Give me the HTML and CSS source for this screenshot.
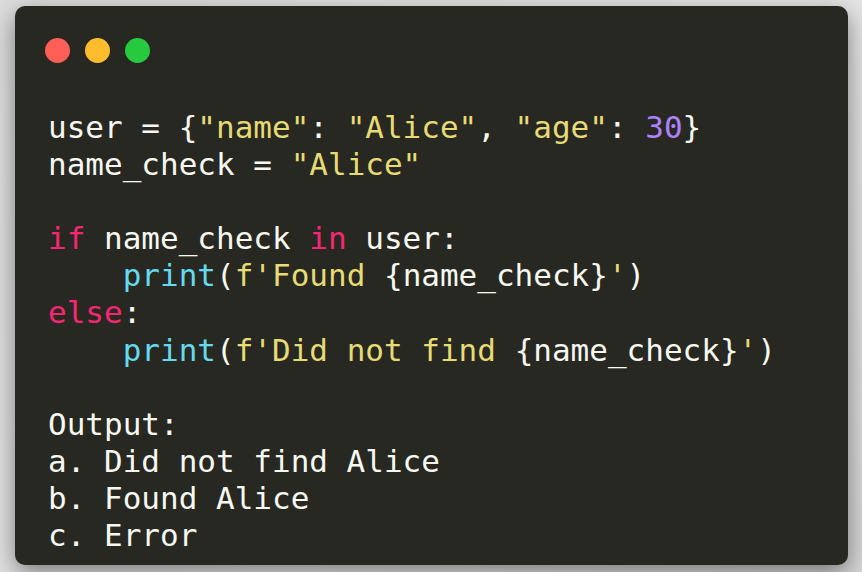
FILE: index.html
```html
<!DOCTYPE html>
<html>
<head>
<meta charset="utf-8">
<link rel="stylesheet" href="styles.css">
</head>
<body>
<div class="page">
  <div class="window">
    <div class="dots">
      <span class="dot red"></span>
      <span class="dot yellow"></span>
      <span class="dot green"></span>
    </div>
<pre class="code">user = {<span class="s">"name"</span>: <span class="s">"Alice"</span>, <span class="s">"age"</span>: <span class="n">30</span>}
name_check = <span class="s">"Alice"</span>

<span class="k">if</span> name_check <span class="k">in</span> user:
    <span class="f">print</span>(<span class="s">f'Found </span>{name_check}<span class="s">'</span>)
<span class="k">else</span>:
    <span class="f">print</span>(<span class="s">f'Did not find </span>{name_check}<span class="s">'</span>)

Output:
a. Did not find Alice
b. Found Alice
c. Error</pre>
  </div>
</div>
</body>
</html>
```
FILE: styles.css
```css
html, body {
  margin: 0;
  padding: 0;
}
body {
  width: 862px;
  height: 572px;
  overflow: hidden;
  background: linear-gradient(135deg, #dcdcdc 0%, #e4e4e4 60%, #d6d6d6 100%);
}
.page {
  padding: 6px 14px 0 15px;
}
.window {
  width: 833px;
  height: 559px;
  box-sizing: border-box;
  background: #272822;
  border-radius: 10px;
  box-shadow: 0 8px 24px rgba(0, 0, 0, 0.45);
  padding: 32px 30px 0 30px;
}
.dots {
  display: flex;
  gap: 15px;
}
.dot {
  width: 25px;
  height: 25px;
  border-radius: 50%;
  display: block;
}
.red { background: #ff5f56; }
.yellow { background: #ffbd2e; }
.green { background: #27c93f; }
.code {
  margin: 46px 0 0 0;
  padding-left: 3px;
  font-family: "DejaVu Sans Mono", "Liberation Mono", monospace;
  font-size: 31px;
  line-height: 37.1px;
  color: #f8f8f2;
}
.s { color: #e6db74; }
.n { color: #ae81ff; }
.k { color: #f92672; }
.f { color: #66d9ef; }
```
